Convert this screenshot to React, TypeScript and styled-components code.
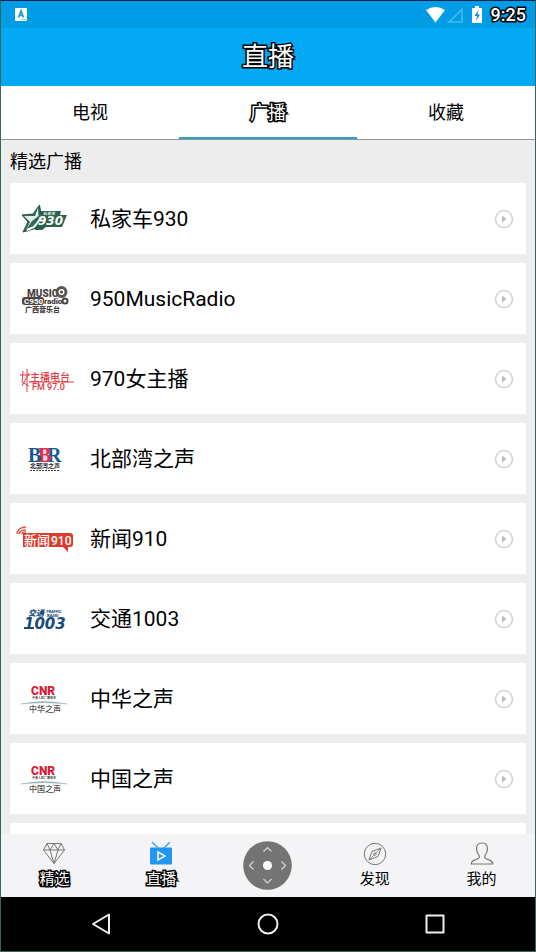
import React, { useState } from 'react';
import styled, { createGlobalStyle, css } from 'styled-components';

const GlobalStyle = createGlobalStyle`
  *, *::before, *::after { box-sizing: border-box; }
  body {
    margin: 0;
    background: #ededed;
    color: #000;
    font-family: Roboto, "Noto Sans CJK SC", sans-serif;
  }
  button {
    margin: 0;
    padding: 0;
    border: 0;
    background: none;
    color: inherit;
    font: inherit;
    cursor: pointer;
  }
`;

const outlined = css`
  color: #fff;
  -webkit-text-stroke: 3px #000;
  paint-order: stroke fill;
`;

const Screen = styled.div`
  display: flex;
  flex-direction: column;
  height: 100vh;
  border: 1px solid #36665c;
  border-top-color: #0b2348;
  overflow: hidden;
`;

const StatusBar = styled.div`
  flex: none;
  display: flex;
  align-items: center;
  justify-content: space-between;
  height: 27px;
  padding: 0 9px 0 14px;
  background: #009ce6;
`;

const StatusIcons = styled.div`
  display: flex;
  align-items: center;
`;

const Clock = styled.time`
  ${outlined}
  margin-left: 8px;
  font-size: 18px;
  font-weight: 500;
  line-height: 26px;
`;

const Header = styled.header`
  flex: none;
  display: flex;
  align-items: center;
  justify-content: center;
  height: 58px;
  background: #03a9f4;
`;

const Title = styled.h1`
  ${outlined}
  margin: 0;
  font-size: 26px;
  font-weight: 400;
  line-height: 36px;
`;

const Tabs = styled.div`
  flex: none;
  display: grid;
  grid-template-columns: repeat(3, 1fr);
  height: 54px;
  background: #fff;
  border-bottom: 1px solid #8f9799;
`;

const Tab = styled.button<{ $active: boolean }>`
  padding-top: 3px;
  border-bottom: 2px solid ${p => (p.$active ? '#2f9fc9' : 'transparent')};
  font-size: 18px;
  line-height: 24px;
  ${p => p.$active && outlined}
`;

const Content = styled.main`
  flex: 1;
  min-height: 0;
  padding: 0 9px;
  overflow-y: auto;
  scrollbar-width: none;
  background: #ededed;
`;

const SectionTitle = styled.h2`
  margin: 0;
  padding: 9px 0 8px;
  font-size: 18px;
  font-weight: 400;
  line-height: 26px;
`;

const StationList = styled.ul`
  display: flex;
  flex-direction: column;
  gap: 9px;
  margin: 0;
  padding: 0;
  list-style: none;
`;

const Station = styled.li`
  display: flex;
  align-items: center;
  min-height: 71px;
  padding: 0 12px 0 5px;
  background: #fff;
`;

const StationName = styled.span`
  flex: 1;
  margin-left: 15px;
  font-size: 21px;
  line-height: 30px;
`;

const PlayButton = styled.button`
  display: flex;
`;

const BottomNav = styled.nav`
  flex: none;
  display: grid;
  grid-template-columns: repeat(5, 1fr);
  height: 63px;
  background: #f4f4f6;
`;

const NavItem = styled.button<{ $outlined?: boolean }>`
  display: flex;
  flex-direction: column;
  align-items: center;
  justify-content: center;
  gap: 2px;
  font-size: 15px;
  line-height: 24px;
  ${p => p.$outlined && outlined}
`;

const SystemBar = styled.div`
  flex: none;
  display: grid;
  grid-template-columns: repeat(3, 1fr);
  height: 54px;
  padding: 0 3%;
  background: #000;
`;

const SystemButton = styled.button`
  display: flex;
  align-items: center;
  justify-content: center;
`;

const Logo = styled.svg.attrs({ viewBox: '5 -2 60 60', width: 60, height: 60, 'aria-hidden': true })`
  flex: none;
  font-family: Roboto, "Noto Sans CJK SC", sans-serif;
`;

const Logo930 = () => (
  <Logo>
    <path d="M28 20H51L50 24H57L52 36H36L32 39H25Z" fill="#28644b" />
    <path d="M29.500 14L31 23L38 26L31 31L27 37L13 41L18 31L12 24L23 23Z" fill="#2d6c52" stroke="#28523f" />
    <path d="M28 17L28.500 25L22 30L16 39L20 31L14 25L25 25Z" fill="#e5eee9" />
    <path d="M31 27L24 36L17 39" fill="none" stroke="#fff" strokeWidth="2" />
    <text x="33" y="24" fill="#dfe9e4" fontSize="4" fontWeight="700" fontStyle="italic">私家车</text>
    <text x="28" y="34" fill="#fff" fontSize="12" fontFamily="DejaVu Sans" fontWeight="700" fontStyle="italic">930</text>
  </Logo>
);

const Logo950 = () => (
  <Logo fill="#4a4241" fontWeight="900">
    <text x="17" y="26" fontSize="10">MUSIC</text>
    <circle cx="51.500" cy="21" r="4.500" fill="#fff" stroke="#5b5453" strokeWidth="3" />
    <circle cx="51.500" cy="21" r="1.500" />
    <rect x="12" y="26" width="22" height="8" rx="3" />
    <text x="14" y="33" fontSize="8" fill="#f2efee">C950</text>
    <text x="34" y="33" fontSize="8">radio</text>
    <circle cx="55" cy="30" r="2.500" fill="none" stroke="#4a4241" strokeWidth="2" />
    <text x="15" y="41" fontSize="7">广西音乐台</text>
  </Logo>
);

const Logo970 = () => (
  <Logo fill="#dd3a43">
    <path d="M10 24H20M13 20L12 31L19 35M19 22L12 35M17 18V41M19 31H64" fill="none" stroke="#dd3a43" />
    <text x="20" y="30" fontSize="10" fontWeight="500">主播电台</text>
    <text x="22" y="39" fontSize="9" fontWeight="500">FM 97.0</text>
  </Logo>
);

const LogoBBR = () => (
  <Logo fontWeight="700">
    <rect x="30" y="17" width="9" height="14" fill="#f4d3da" />
    <g fontFamily="Liberation Serif" fontSize="20">
      <text x="37" y="31" fill="#175997">R</text>
      <text x="28" y="31" fill="#df304f">B</text>
      <text x="18" y="31" fill="#175997">B</text>
    </g>
    <text x="20" y="37" fontSize="6" fill="#222">北部湾之声</text>
    <path d="M20 39.500H50" stroke="#444" strokeDasharray="2 1" />
  </Logo>
);

const Logo910 = () => (
  <Logo>
    <path d="M13 22H60Q63 22 63 25V33Q63 36 60 36H58V41L53 36H13Z" fill="#df3b2c" />
    <g fill="none" stroke="#e45b49" strokeWidth="1.500">
      <path d="M7 23Q8 16 16 16M9 23Q10 19 16 19M12 23Q12 21 16 21" />
    </g>
    <text x="14" y="34" fontSize="13" fontWeight="500" fill="#fff">新闻</text>
    <text x="41" y="34" fontSize="12" fontWeight="500" fill="#fff">910</text>
  </Logo>
);

const Logo1003 = () => (
  <Logo fill="#174c78" fontWeight="900" fontStyle="italic">
    <text x="18" y="25" fontSize="8">交通</text>
    <text x="36" y="22" fontSize="4">TRAFFIC</text>
    <text x="37" y="26" fontSize="4">RADIO</text>
    <text x="14" y="38" fontSize="15" fontFamily="DejaVu Sans">1003</text>
    <path d="M14 37H24" stroke="#174c78" strokeWidth="2" />
  </Logo>
);

const LogoCNR = ({ name }: { name: string }) => (
  <Logo>
    <text x="21" y="24" fontSize="12" fontWeight="900" fill="#e01b35">CNR</text>
    <text x="22" y="28" fontSize="3" fontWeight="700" fill="#333">中央人民广播电台</text>
    <path d="M11 33Q34 28 57 33Q34 30 11 33Z" fill="#6e96a5" stroke="#9fb7bf" strokeWidth=".5" />
    <text x="19" y="41" fontSize="8" fill="#111">{name}</text>
  </Logo>
);

const stations = [
  { name: '私家车930', logo: <Logo930 /> },
  { name: '950MusicRadio', logo: <Logo950 /> },
  { name: '970女主播', logo: <Logo970 /> },
  { name: '北部湾之声', logo: <LogoBBR /> },
  { name: '新闻910', logo: <Logo910 /> },
  { name: '交通1003', logo: <Logo1003 /> },
  { name: '中华之声', logo: <LogoCNR name="中华之声" /> },
  { name: '中国之声', logo: <LogoCNR name="中国之声" /> },
];

const PlayIcon = () => (
  <svg width="20" height="20" viewBox="0 0 20 20" aria-hidden="true">
    <circle cx="10" cy="10" r="8.500" fill="none" stroke="#d2d2d2" strokeWidth="1.500" />
    <path d="M8 6.500L12.500 10L8 13.500Z" fill="#bdbdbd" />
  </svg>
);

const DiamondIcon = () => (
  <svg width="24" height="24" viewBox="0 0 24 24" fill="none" stroke="#777" strokeLinejoin="round" aria-hidden="true">
    <path d="M5 2.500H19L22.500 9L12 22.500L1.500 9ZM1.500 9H22.500M5 2.500L8 9L12 22.500L16 9L19 2.500M8 9L12 2.500L16 9" />
  </svg>
);

const TvIcon = () => (
  <svg width="24" height="24" viewBox="0 0 24 24" aria-hidden="true">
    <path d="M3 1L9 7M21 1L15 7" stroke="#4aa7ee" strokeWidth="1.500" />
    <rect x="1" y="6.500" width="22" height="17" rx="1" fill="#2196f3" />
    <path d="M9 11L16 15L9 19Z" fill="none" stroke="#fff" strokeWidth="1.500" />
  </svg>
);

const PadIcon = () => (
  <svg width="49" height="49" viewBox="0 0 49 49" fill="none" stroke="#d5d5d5" strokeWidth="1.200" aria-hidden="true">
    <circle cx="24.500" cy="24.500" r="24.300" fill="#747474" stroke="none" />
    <circle cx="24.500" cy="24.500" r="4.500" fill="#fff" stroke="none" />
    <path d="M20.500 10.500L24.500 6.500L28.500 10.500M20.500 38L24.500 42L28.500 38M10.500 20.500L6.500 24.500L10.500 28.500M38.500 20.500L42.500 24.500L38.500 28.500" />
  </svg>
);

const CompassIcon = () => (
  <svg width="24" height="24" viewBox="0 0 24 24" fill="none" stroke="#777" aria-hidden="true">
    <circle cx="12" cy="13" r="10.700" />
    <path d="M18 7L15 15.500L6 19L9 10.500Z" strokeLinejoin="round" />
    <path d="M18 7L13 12M6 19L11 14" strokeWidth=".7" />
    <circle cx="12" cy="13" r="1.200" fill="#f4f4f6" />
  </svg>
);

const PersonIcon = () => (
  <svg width="24" height="24" viewBox="0 0 24 24" fill="none" stroke="#777" strokeWidth="1.200" strokeLinejoin="round" aria-hidden="true">
    <path d="M12 2C8.500 2 6.500 4 6.500 8C6.500 11 8 13 9.300 15C9.800 17 9 17.500 7 18.200C4 19 1.500 20 1.200 23H22.800C22.500 20 20 19 17 18.200C15 17.500 14.200 17 14.700 15C16 13 17.500 11 17.500 8C17.500 4 15.500 2 12 2Z" />
  </svg>
);

const navItems = [
  { label: '精选', icon: <DiamondIcon />, outlined: true },
  { label: '直播', icon: <TvIcon />, outlined: true },
  { label: '', icon: <PadIcon /> },
  { label: '发现', icon: <CompassIcon /> },
  { label: '我的', icon: <PersonIcon /> },
];

export default function App() {
  const [tab, setTab] = useState('广播');
  return (
    <>
      <GlobalStyle />
      <Screen>
        <StatusBar>
          <svg width="12" height="13" viewBox="0 0 12 13" aria-hidden="true">
            <rect width="12" height="13" rx="1" fill="#fff" />
            <path d="M3.500 9.500L6 3L8.500 9.500M4.500 7.500H7.500" fill="none" stroke="#1598da" strokeWidth="1.600" />
            <path d="M6 11.500H11" stroke="#9bd1ee" />
          </svg>
          <StatusIcons>
            <svg width="57" height="18" viewBox="0 0 57 18" aria-hidden="true">
              <path d="M0 4Q9.500 -2 19 4L9.500 16.500Z" fill="#fff" />
              <path d="M36 3.500V16H23Z" fill="none" stroke="#4dbbef" strokeWidth="1.500" />
              <path d="M49 0H53V2H56V17H46V2H49Z" fill="#fff" />
              <path d="M52.500 4L48.500 10H51L50 14.500L54 8.500H51.500Z" fill="#168dcc" />
            </svg>
            <Clock>9:25</Clock>
          </StatusIcons>
        </StatusBar>
        <Header>
          <Title>直播</Title>
        </Header>
        <Tabs role="tablist">
          {['电视', '广播', '收藏'].map(name => (
            <Tab key={name} role="tab" aria-selected={tab === name} $active={tab === name} onClick={() => setTab(name)}>
              {name}
            </Tab>
          ))}
        </Tabs>
        <Content>
          <SectionTitle>精选广播</SectionTitle>
          <StationList>
            {stations.map(({ name, logo }) => (
              <Station key={name}>
                {logo}
                <StationName>{name}</StationName>
                <PlayButton aria-label={`播放 ${name}`}>
                  <PlayIcon />
                </PlayButton>
              </Station>
            ))}
            <Station />
          </StationList>
        </Content>
        <BottomNav>
          {navItems.map(({ label, icon, outlined: isOutlined }, i) => (
            <NavItem key={i} $outlined={isOutlined} aria-label={label || '遥控器'}>
              {icon}
              {label && <span>{label}</span>}
            </NavItem>
          ))}
        </BottomNav>
        <SystemBar>
          <SystemButton aria-label="返回">
            <svg width="22" height="22" viewBox="0 0 22 22" fill="none" stroke="#eee" strokeWidth="2" strokeLinejoin="round">
              <path d="M19 1.500V20.500L3 11Z" />
            </svg>
          </SystemButton>
          <SystemButton aria-label="主页">
            <svg width="22" height="22" viewBox="0 0 22 22" fill="none" stroke="#eee" strokeWidth="2">
              <circle cx="11" cy="11" r="9.500" />
            </svg>
          </SystemButton>
          <SystemButton aria-label="最近任务">
            <svg width="22" height="22" viewBox="0 0 22 22" fill="none" stroke="#eee" strokeWidth="2" strokeLinejoin="round">
              <rect x="2.500" y="2.500" width="17" height="17" />
            </svg>
          </SystemButton>
        </SystemBar>
      </Screen>
    </>
  );
}
